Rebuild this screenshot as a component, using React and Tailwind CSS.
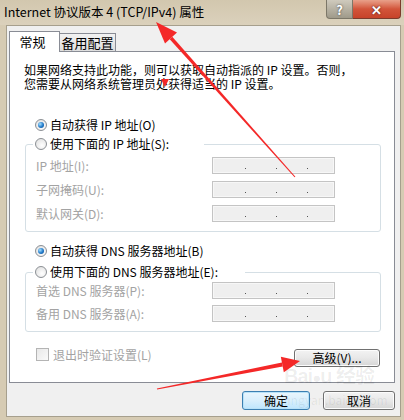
import React from "react";

const FONT = { fontFamily: '"Noto Sans CJK SC", "Liberation Sans", sans-serif' };

// ::: small win7 controls ::: //
const Radio = ({ checked }) => (
  <span className="flex h-[12px] w-[12px] shrink-0 items-center justify-center rounded-full border border-[#8b8f94] bg-[radial-gradient(circle_at_60%_65%,#ffffff,#dcdcdc)]">
    {checked && (
      <span className="h-[6px] w-[6px] rounded-full bg-[radial-gradient(circle_at_35%_35%,#a6e0ff,#1f78c8_55%,#0d4a8a)]" />
    )}
  </span>
);

const IpBox = () => (
  <div className="flex h-[17px] w-[123px] items-end border border-[#c4c4c4] bg-[#efefef] pb-[4px] pl-[32px] shadow-[inset_0_0_0_1px_#f7f7f7]">
    <span className="h-[1px] w-[1px] bg-[#555]" />
    <span className="ml-[30px] h-[1px] w-[1px] bg-[#555]" />
    <span className="ml-[30px] h-[1px] w-[1px] bg-[#555]" />
  </div>
);

const FieldRow = ({ label, className }) => (
  <div className={`flex items-center pl-[10px] ${className}`}>
    <span className="w-[176px] text-[12px] leading-[17px] text-[#a3a3a3]">{label}</span>
    <IpBox />
  </div>
);

const WinButton = ({ children, className, primary }) => (
  <div
    className={`flex items-center justify-center rounded-[3px] border text-[12px] leading-none text-black ${
      primary
        ? "border-[#3c7fb1] bg-gradient-to-b from-[#eaf6fd] via-[#d9effc] to-[#bee6fd] shadow-[inset_0_0_0_1px_#b8e2f8]"
        : "border-[#707070] bg-gradient-to-b from-[#f3f3f3] via-[#e8e8e8] to-[#d6d6d6] shadow-[inset_0_0_0_1px_#fcfcfc]"
    } ${className}`}
  >
    {children}
  </div>
);

const GroupBox = ({ legend, legendWidth, children, className }) => (
  <div className={`ml-[15px] w-[356px] rounded-[3px] border border-[#d5dfe5] ${className}`}>
    <div className={`-mt-[8px] ml-[7px] flex h-[14px] items-center gap-[3px] bg-white pl-[2px] ${legendWidth}`}>
      <Radio />
      <span className="text-[12px] leading-[14px] text-black">{legend}</span>
    </div>
    {children}
  </div>
);

const Arrows = () => (
  <svg className="pointer-events-none absolute left-0 top-0" width="404" height="420" viewBox="0 0 404 420">
    {/* title arrow */}
    <polygon points="294.6,177.3 295.4,176.7 172.3,36.8 169.7,39.2" fill="#f42828" />
    <polygon points="156,22 165,43.5 177,32.5" fill="#f42828" />
    {/* small marker */}
    <polygon points="161,79 169,79 165,87" fill="#f42828" />
    {/* advanced button arrow */}
    <polygon points="157.1,389.6 156.9,388.4 281.9,362.5 282.7,366.5" fill="#f42828" />
    <polygon points="300,361 280.8,356.7 283.8,372.3" fill="#f42828" />
  </svg>
);

export default function App() {
  return (
    <div className="relative h-[420px] w-[404px] overflow-hidden bg-[#d6cbb3]" style={FONT}>
      {/* ::: Title Bar ::: */}
      <div className="flex h-[25px] items-start bg-gradient-to-b from-[#d2c7ae] to-[#dbd1bc]">
        <span className="pl-[4px] pt-[3px] text-[12.5px] leading-[18px] text-black">
          Internet 协议版本 4 (TCP/IPv4) 属性
        </span>
        <div className="ml-auto mr-[3px] flex h-[19px]">
          <div className="flex w-[27px] items-center justify-center rounded-bl-[4px] border border-t-0 border-[#7c7768] bg-gradient-to-b from-[#cfcabd] to-[#9f9a8a] text-[13px] font-bold leading-none text-white [text-shadow:0_0_2px_#333]">
            ?
          </div>
          <div className="flex w-[48px] items-center justify-center rounded-br-[4px] border border-l-0 border-t-0 border-[#7c3b2c] bg-gradient-to-b from-[#e8a08a] via-[#d2543a] to-[#c7432a] text-[13px] font-bold leading-none text-white [text-shadow:0_0_2px_#401010]">
            ✕
          </div>
        </div>
      </div>

      {/* ::: Client Area ::: */}
      <div className="ml-[6px] flex h-[392px] w-[395px] flex-col border border-[#a69f8d] bg-[#f0f0f0]">
        {/* tabs */}
        <div className="ml-[2px] mt-[5px] flex h-[21px] items-start">
          <div className="relative z-10 flex h-[21px] w-[51px] items-center justify-center border border-b-0 border-[#898c95] bg-white pr-[4px] text-[13px] text-black">
            常规
          </div>
          <div className="mt-[2px] flex h-[18px] w-[56px] items-center justify-center border border-b-0 border-l-0 border-[#898c95] bg-gradient-to-b from-[#f2f2f2] to-[#dedede] text-[13px] text-black">
            备用配置
          </div>
        </div>

        {/* panel */}
        <div className="-mt-[1px] ml-[2px] flex h-[332px] w-[386px] flex-col border border-[#898c95] bg-white">
          <p className="ml-[14px] mt-[11px] text-[12px] leading-[14px] text-black">
            如果网络支持此功能，则可以获取自动指派的 IP 设置。否则，
            <br />
            您需要从网络系统管理员处获得适当的 IP 设置。
          </p>

          <div className="ml-[25px] mt-[27px] flex h-[14px] items-center gap-[3px]">
            <Radio checked />
            <span className="text-[12px] leading-[14px] text-black">自动获得 IP 地址(O)</span>
          </div>

          <GroupBox legend="使用下面的 IP 地址(S):" legendWidth="w-[171px]" className="mt-[12px] h-[88px]">
            <FieldRow label="IP 地址(I):" className="mt-[6px]" />
            <FieldRow label="子网掩码(U):" className="mt-[7px]" />
            <FieldRow label="默认网关(D):" className="mt-[7px]" />
          </GroupBox>

          <div className="ml-[25px] mt-[12px] flex h-[14px] items-center gap-[3px]">
            <Radio checked />
            <span className="text-[12px] leading-[14px] text-black">自动获得 DNS 服务器地址(B)</span>
          </div>

          <GroupBox legend="使用下面的 DNS 服务器地址(E):" legendWidth="w-[212px]" className="mt-[14px] h-[60px]">
            <FieldRow label="首选 DNS 服务器(P):" className="mt-[3px]" />
            <FieldRow label="备用 DNS 服务器(A):" className="mt-[6px]" />
          </GroupBox>

          <div className="ml-[26px] mr-[14px] mt-[16px] flex items-start justify-between">
            <div className="flex items-center gap-[4px]">
              <span className="h-[13px] w-[13px] border border-[#b4b4b4] bg-gradient-to-br from-[#e8e8e8] to-[#fafafa]" />
              <span className="text-[12px] leading-[13px] text-[#a3a3a3]">退出时验证设置(L)</span>
            </div>
            <WinButton className="mt-[1px] h-[18px] w-[86px]">高级(V)...</WinButton>
          </div>
        </div>

        {/* dialog buttons */}
        <div className="mr-[5px] mt-[8px] flex justify-end gap-[13px]">
          <WinButton primary className="h-[19px] w-[68px]">确定</WinButton>
          <WinButton className="h-[19px] w-[72px]">取消</WinButton>
        </div>
      </div>

      {/* ::: Watermark ::: */}
      <div className="pointer-events-none absolute left-[284px] top-[366px] flex flex-col items-start text-[#000]/[0.07]">
        <span className="text-[20px] font-bold leading-[20px] tracking-[-1px]" style={{ fontFamily: '"Liberation Sans", "Noto Sans CJK SC", sans-serif' }}>
          Bai<span className="text-[15px]">●</span>u 经验
        </span>
        <span className="mt-[6px] text-[12px] leading-[12px]">jingyan.baidu.com</span>
      </div>

      <Arrows />
    </div>
  );
}
